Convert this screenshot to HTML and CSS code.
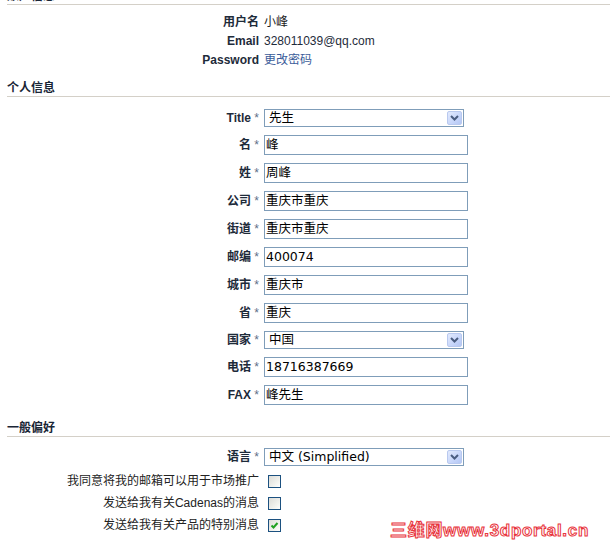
FILE: index.html
```html
<!DOCTYPE html>
<html>
<head>
<meta charset="utf-8">
<link rel="stylesheet" href="styles.css">
</head>
<body>
<div class="page">
  <h2 class="sec first">账户信息</h2>
  <div class="info">
    <div class="irow"><span class="lbl">用户名</span><span class="val">小峰</span></div>
    <div class="irow"><span class="lbl">Email</span><span class="val mail">328011039@qq.com</span></div>
    <div class="irow"><span class="lbl">Password</span><a class="val link" href="#">更改密码</a></div>
  </div>

  <h2 class="sec">个人信息</h2>
  <div class="form personal">
    <div class="frow"><label class="lbl">Title <i>*</i></label><div class="select"><span class="stext">先生</span><span class="arrow"><svg width="9" height="6" viewBox="0 0 9 6"><path d="M1 1 L4.5 4.5 L8 1" fill="none" stroke="#4a5d80" stroke-width="2"/></svg></span></div></div>
    <div class="frow"><label class="lbl">名 <i>*</i></label><div class="input">峰</div></div>
    <div class="frow"><label class="lbl">姓 <i>*</i></label><div class="input">周峰</div></div>
    <div class="frow"><label class="lbl">公司 <i>*</i></label><div class="input">重庆市重庆</div></div>
    <div class="frow"><label class="lbl">街道 <i>*</i></label><div class="input">重庆市重庆</div></div>
    <div class="frow"><label class="lbl">邮编 <i>*</i></label><div class="input">400074</div></div>
    <div class="frow"><label class="lbl">城市 <i>*</i></label><div class="input">重庆市</div></div>
    <div class="frow"><label class="lbl">省 <i>*</i></label><div class="input">重庆</div></div>
    <div class="frow"><label class="lbl">国家 <i>*</i></label><div class="select"><span class="stext">中国</span><span class="arrow"><svg width="9" height="6" viewBox="0 0 9 6"><path d="M1 1 L4.5 4.5 L8 1" fill="none" stroke="#4a5d80" stroke-width="2"/></svg></span></div></div>
    <div class="frow"><label class="lbl">电话 <i>*</i></label><div class="input">18716387669</div></div>
    <div class="frow"><label class="lbl">FAX <i>*</i></label><div class="input">峰先生</div></div>
  </div>

  <h2 class="sec">一般偏好</h2>
  <div class="form prefs">
    <div class="frow"><label class="lbl">语言 <i>*</i></label><div class="select"><span class="stext">中文 (Simplified)</span><span class="arrow"><svg width="9" height="6" viewBox="0 0 9 6"><path d="M1 1 L4.5 4.5 L8 1" fill="none" stroke="#4a5d80" stroke-width="2"/></svg></span></div></div>
    <div class="crow"><label class="clbl">我同意将我的邮箱可以用于市场推广</label><span class="cbox"></span></div>
    <div class="crow"><label class="clbl">发送给我有关Cadenas的消息</label><span class="cbox"></span></div>
    <div class="crow"><label class="clbl">发送给我有关产品的特别消息</label><span class="cbox checked"><svg width="11" height="11" viewBox="0 0 11 11"><path d="M2.5 5.5 L4.5 7.5 L8.5 3" fill="none" stroke="#21a121" stroke-width="2"/></svg></span></div>
  </div>

  <div class="watermark">三维网www.3dportal.cn</div>
</div>
</body>
</html>
```

FILE: styles.css
```css
html, body {
  margin: 0;
  padding: 0;
  background: #fff;
}
body {
  font-family: "Liberation Sans", "Noto Sans CJK SC", sans-serif;
  font-size: 12px;
  color: #1e2b3a;
}
.page {
  position: relative;
  height: 545px;
  overflow: hidden;
  padding-left: 7px;
}
.sec {
  margin: 0;
  padding: 0;
  font-size: 12px;
  font-weight: bold;
  line-height: 16px;
  color: #1a2636;
  border-bottom: 1px solid #d4d0c8;
}
.sec.first {
  margin-top: -12px;
}
.info {
  padding-top: 8px;
  margin-bottom: 10px;
}
.irow {
  display: grid;
  grid-template-columns: 252px 1fr;
  column-gap: 5px;
  line-height: 19px;
  height: 19px;
}
.lbl {
  text-align: right;
  font-weight: bold;
  color: #1e2b3a;
  white-space: nowrap;
}
.lbl i {
  font-style: normal;
  font-weight: normal;
  color: #5d6f88;
}
.val {
  color: #222;
}
.val.mail {
  color: #1e2b3a;
}
.val.link {
  color: #3b5c9a;
  text-decoration: none;
}
.form {
  display: flex;
  flex-direction: column;
}
.personal {
  padding-top: 12px;
  gap: 8px;
  margin-bottom: 15px;
}
.prefs {
  padding-top: 11px;
  gap: 9px;
}
.frow {
  display: grid;
  grid-template-columns: 252px auto;
  column-gap: 5px;
  align-items: center;
  justify-content: start;
}
.frow .lbl {
  line-height: 16px;
}
.input {
  box-sizing: border-box;
  width: 204px;
  height: 20px;
  border: 1px solid #7f9db9;
  padding-left: 1px;
  font-family: "DejaVu Sans", "Noto Sans CJK SC", sans-serif;
  font-size: 12.5px;
  line-height: 18px;
  color: #000;
  background: #fff;
}
.select {
  box-sizing: border-box;
  width: 200px;
  height: 18px;
  border: 1px solid #7f9db9;
  display: flex;
  align-items: center;
  justify-content: space-between;
  background: #fff;
}
.stext {
  padding-left: 4px;
  font-family: "DejaVu Sans", "Noto Sans CJK SC", sans-serif;
  font-size: 12.5px;
  line-height: 16px;
  color: #000;
}
.arrow {
  box-sizing: border-box;
  width: 15px;
  height: 14px;
  margin-right: 1px;
  border: 1px solid #b9c9ef;
  border-radius: 2px;
  background: linear-gradient(135deg, #e2eafd 0%, #c6d5fa 60%, #b4c7f4 100%);
  display: flex;
  align-items: center;
  justify-content: center;
}
.crow {
  display: grid;
  grid-template-columns: 252px auto;
  column-gap: 9px;
  align-items: center;
  justify-content: start;
  height: 13px;
}
.clbl {
  text-align: right;
  color: #222;
  line-height: 13px;
  white-space: nowrap;
}
.cbox {
  box-sizing: border-box;
  width: 13px;
  height: 13px;
  border: 1px solid #1c5180;
  background: linear-gradient(135deg, #dcdcd7 0%, #f4f4f0 70%, #ffffff 100%);
  display: flex;
  align-items: center;
  justify-content: center;
}
.watermark {
  position: absolute;
  left: 390px;
  top: 522px;
  font-family: "Liberation Sans", "Noto Sans CJK SC", sans-serif;
  font-weight: bold;
  font-size: 17px;
  line-height: 18px;
  color: #fff;
  -webkit-text-stroke: 1px #e8343c;
  letter-spacing: 0.7px;
  white-space: nowrap;
}
```
